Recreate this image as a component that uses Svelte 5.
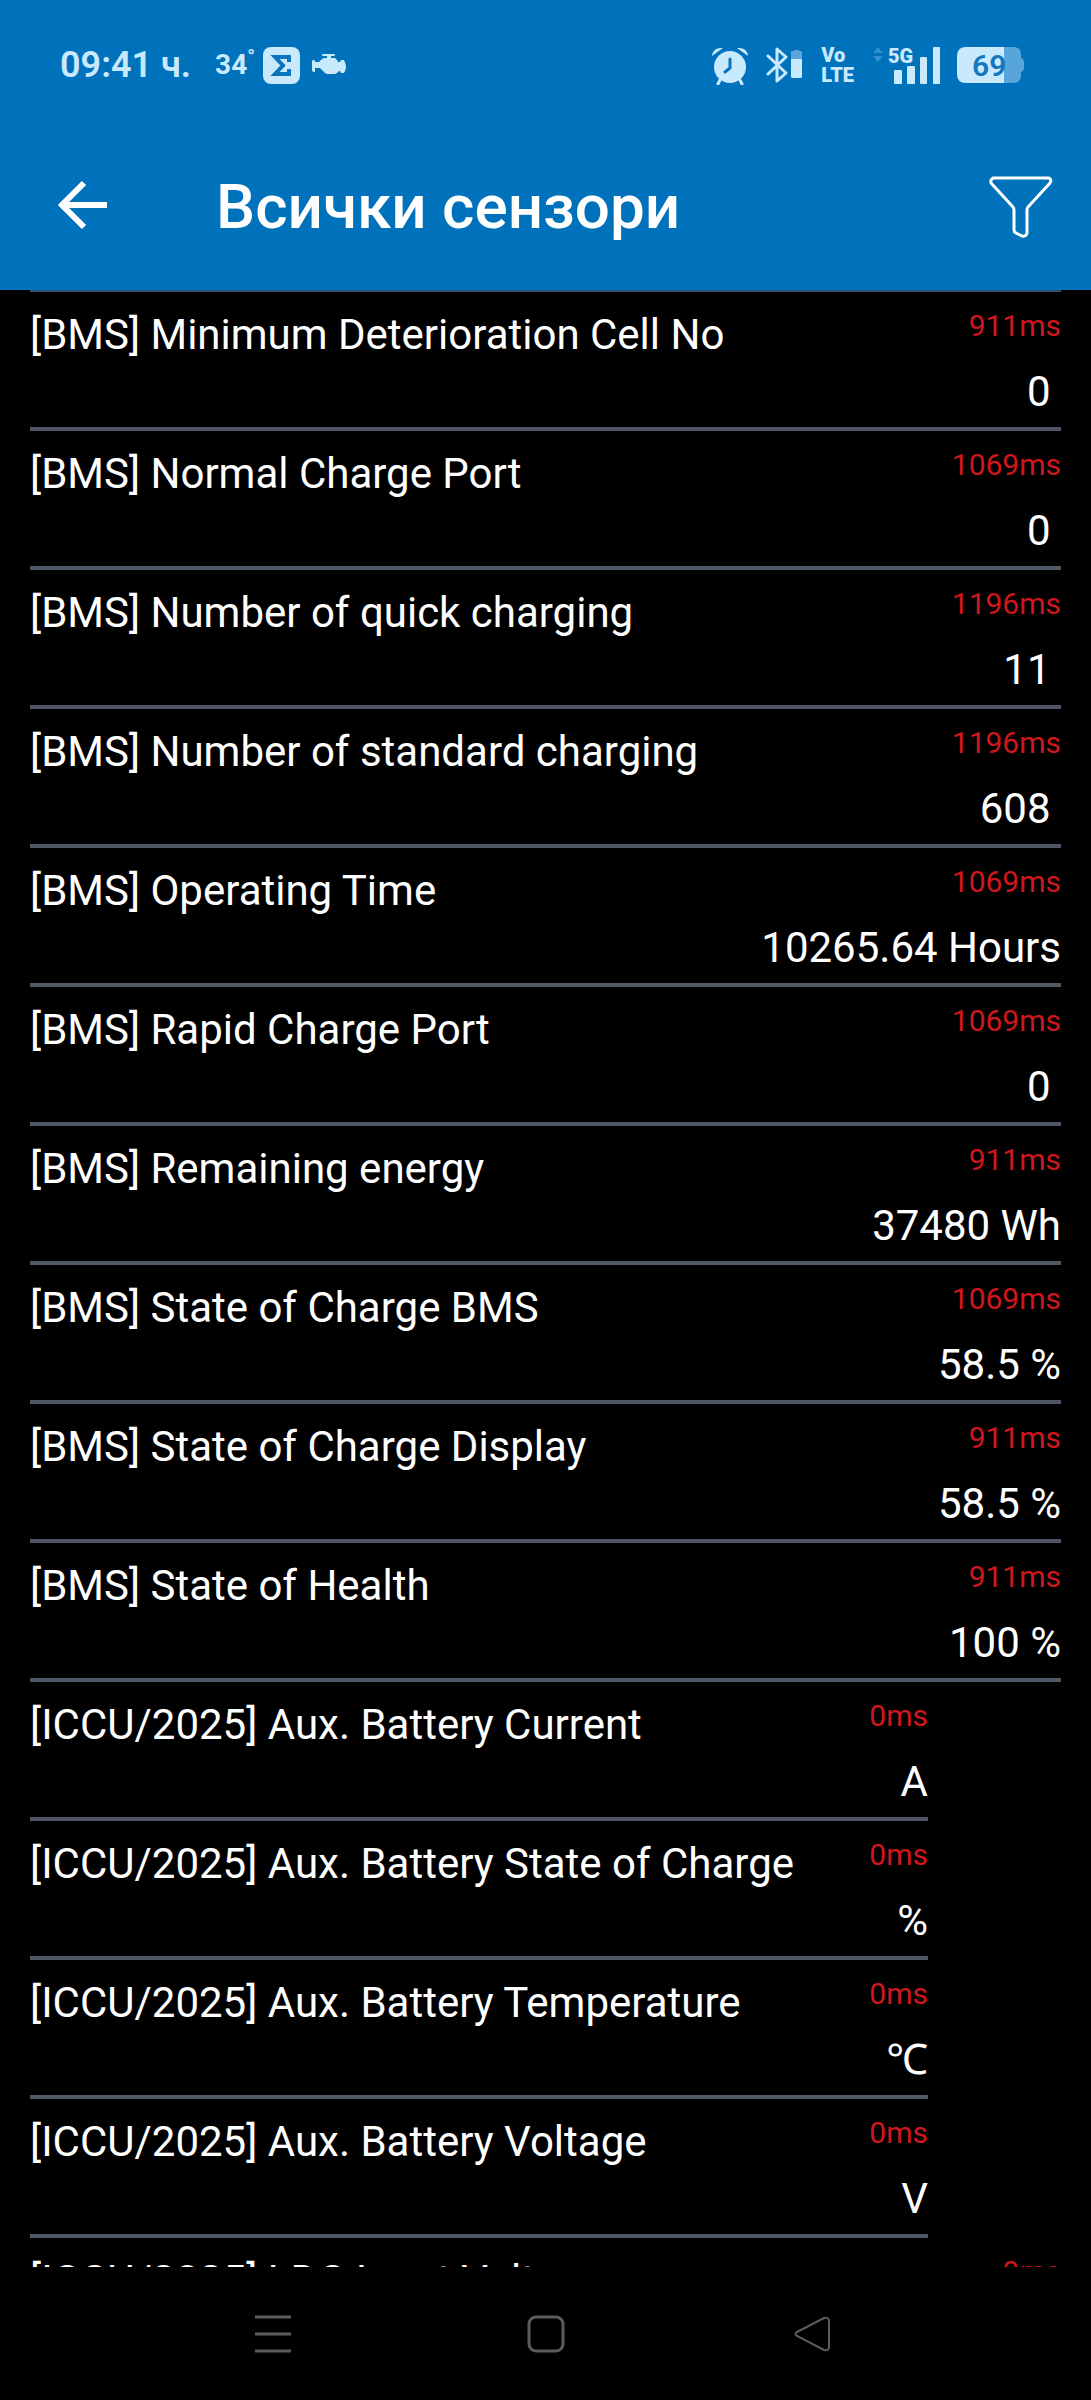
<script lang="ts">
  type Sensor = {
    name: string;
    delay: number;
    value: string;
    narrow?: boolean;
  };

  // values without a unit keep the separator space after the number
  const sensors: Sensor[] = [
    { name: "[BMS] Minimum Deterioration Cell No", delay: 911, value: "0 " },
    { name: "[BMS] Normal Charge Port", delay: 1069, value: "0 " },
    { name: "[BMS] Number of quick charging", delay: 1196, value: "11 " },
    { name: "[BMS] Number of standard charging", delay: 1196, value: "608 " },
    { name: "[BMS] Operating Time", delay: 1069, value: "10265.64 Hours" },
    { name: "[BMS] Rapid Charge Port", delay: 1069, value: "0 " },
    { name: "[BMS] Remaining energy", delay: 911, value: "37480 Wh" },
    { name: "[BMS] State of Charge BMS", delay: 1069, value: "58.5 %" },
    { name: "[BMS] State of Charge Display", delay: 911, value: "58.5 %" },
    { name: "[BMS] State of Health", delay: 911, value: "100 %" },
    { name: "[ICCU/2025] Aux. Battery Current", delay: 0, value: "A", narrow: true },
    { name: "[ICCU/2025] Aux. Battery State of Charge", delay: 0, value: "%", narrow: true },
    { name: "[ICCU/2025] Aux. Battery Temperature", delay: 0, value: "℃", narrow: true },
    { name: "[ICCU/2025] Aux. Battery Voltage", delay: 0, value: "V", narrow: true },
    { name: "[ICCU/2025] LDC Input Voltage", delay: 0, value: "" },
  ];
</script>

<div class="screen">
  <header>
    <div class="status">
      <div class="status-group">
        <span class="time">09:41 ч.</span>
        <span class="temp">34<sup>°</sup></span>
        <svg class="sigma" width="37" height="37" viewBox="0 0 37 37" aria-hidden="true">
          <rect width="37" height="37" rx="8" fill="currentColor" />
          <path d="M26 15V10H12L20 18.500L12 27H26V22" fill="none" stroke="#0a74bd" stroke-width="4" />
        </svg>
        <svg width="35" height="24" viewBox="0 0 35 24" fill="currentColor" aria-hidden="true">
          <path d="M11 1h11q1 0 1 1t-1 1h-3v2h3q2 0 3 2l1 2h2q0-2 2-2h2q2 4 2 7t-2 6h-2q-2 0-2-2h-1l-2 2q-1 1-3 1h-6q-2 0-3-1l-5-5H3v4q-3 0-3-2V8q0-1 2-1 1 0 1 2h4l3-3q1-1 3-1h2V3h-4q-1 0-1-1t1-1z" />
        </svg>
      </div>

      <div class="status-group right">
        <svg width="39" height="39" viewBox="0 0 39 39" aria-hidden="true">
          <circle cx="19" cy="21" r="16" fill="currentColor" />
          <path d="M1 10Q2 1 12 2zM26 2q10-1 11 8z" fill="currentColor" />
          <path d="M9 34l-2 4M29 34l2 4" stroke="currentColor" stroke-width="3" stroke-linecap="round" />
          <path d="M19 13v9l-5 4" stroke="#0a74bd" stroke-width="3" stroke-linecap="round" fill="none" />
        </svg>
        <svg class="bluetooth" width="37" height="38" viewBox="0 0 37 38" aria-hidden="true">
          <path d="M2 10L20 27L11 35V3L20 11L2 28" fill="none" stroke="currentColor" stroke-width="3" stroke-linejoin="round" stroke-linecap="round" />
          <path d="M25 14V6q0-1 2-1h1V4h5v1h1q2 0 2 1v8z" fill="#5aa6dc" />
          <path d="M25 13h11v18q0 1-2 1h-7q-2 0-2-1z" fill="currentColor" />
        </svg>
        <span class="volte">Vo<br />LTE</span>
        <svg class="signal" width="69" height="40" viewBox="0 0 69 40" aria-hidden="true">
          <path d="M1 8l5-6 5 6zM1 11l5 6 5-6z" fill="#2f8fd0" />
          <text x="16" y="18" font-size="20" font-weight="900" fill="currentColor">5G</text>
          <g fill="currentColor">
            <rect x="22" y="25" width="8" height="14" rx="1" />
            <rect x="35" y="21" width="8" height="18" rx="1" />
            <rect x="48" y="12" width="7" height="27" rx="1" />
            <rect x="61" y="2" width="7" height="37" rx="1" />
          </g>
        </svg>
        <svg class="battery" width="67" height="36" viewBox="0 0 67 36" aria-hidden="true">
          <path d="M47 0h9q8 0 8 8v3q3 1 3 4v6q0 3-3 4v3q0 8-8 8h-9z" fill="#58a5db" />
          <path d="M9 0h38v36H9q-9 0-9-9V9q0-9 9-9z" fill="currentColor" />
          <text x="15" y="29" font-size="30" font-weight="600" fill="#1577bd">69</text>
        </svg>
      </div>
    </div>

    <div class="toolbar">
      <button type="button" class="back" aria-label="Назад">
        <svg width="50" height="50" viewBox="0 0 50 50" aria-hidden="true">
          <path d="M26 3L4 25l22 22M4 25h45" fill="none" stroke="currentColor" stroke-width="6" />
        </svg>
      </button>
      <h1>Всички сензори</h1>
      <button type="button" class="filter" aria-label="Филтър">
        <svg width="64" height="62" viewBox="0 0 64 62" aria-hidden="true">
          <path d="M4 2h56q3 2 1 5L39 31q-1 1-1 3v23q-1 4-5 3l-6-3q-2-1-2-3V34q0-2-1-3L2 7Q1 4 4 2z" fill="none" stroke="currentColor" stroke-width="3" stroke-linejoin="round" />
        </svg>
      </button>
    </div>
  </header>

  <main>
    <ul>
      {#each sensors as sensor}
        <li class:narrow={sensor.narrow}>
          <span class="name">{sensor.name}</span>
          <div class="reading">
            <span class="delay">{sensor.delay}ms</span>
            <span class="value">{sensor.value}</span>
          </div>
        </li>
      {/each}
    </ul>
  </main>

  <nav>
    <button type="button" aria-label="Последни">
      <svg width="38" height="38" viewBox="0 0 38 38" aria-hidden="true">
        <path d="M1 2h36M1 19h36M1 36h36" stroke="currentColor" stroke-width="3" />
      </svg>
    </button>
    <button type="button" aria-label="Начало">
      <svg width="38" height="38" viewBox="0 0 38 38" aria-hidden="true">
        <rect x="2" y="2" width="34" height="34" rx="7" fill="none" stroke="currentColor" stroke-width="3" />
      </svg>
    </button>
    <button type="button" aria-label="Обратно">
      <svg width="50" height="38" viewBox="0 0 50 38" aria-hidden="true">
        <path d="M4 17L31 3q5-1 5 3v26q0 4-5 3L4 21q-3-2 0-4z" fill="none" stroke="currentColor" stroke-width="2" />
      </svg>
    </button>
  </nav>
</div>

<style>
  :global(body) {
    background: #000;
  }

  .screen {
    display: flex;
    flex-direction: column;
    height: 100vh;
    background: #000;
    color: #fff;
    font-family: Roboto, "Noto Sans", "Noto Sans CJK SC", sans-serif;
    overflow: hidden;
  }

  header {
    flex: none;
    background: #0072bc;
  }

  .status {
    display: flex;
    align-items: center;
    justify-content: space-between;
    height: 130px;
    padding: 0 67px 0 60px;
    color: #c9e9fd;
  }

  .status-group {
    display: flex;
    align-items: center;
  }

  .time {
    font-size: 36px;
    font-weight: 600;
    line-height: 40px;
  }

  .temp {
    display: flex;
    margin-left: 24px;
    font-size: 28px;
    font-weight: 700;
    line-height: 40px;
  }

  .temp sup {
    font-size: 20px;
    line-height: 24px;
  }

  .sigma {
    margin: 0 12px 0 8px;
  }

  .bluetooth {
    margin-left: 16px;
  }

  .volte {
    margin-left: 18px;
    font-size: 20px;
    font-weight: 900;
    line-height: 20px;
  }

  .signal {
    margin-left: 18px;
  }

  .battery {
    margin-left: 16px;
  }

  .toolbar {
    display: flex;
    align-items: center;
    height: 160px;
    padding: 0 38px 6px 58px;
    box-sizing: border-box;
  }

  button {
    padding: 0;
    border: 0;
    background: none;
    color: inherit;
    cursor: pointer;
  }

  svg {
    display: block;
    flex: none;
  }

  .back {
    padding-bottom: 4px;
  }

  h1 {
    flex: 1;
    margin: 0 0 0 108px;
    font-size: 62px;
    font-weight: 500;
    line-height: 72px;
  }

  main {
    flex: 1;
    min-height: 0;
    overflow: hidden;
  }

  ul {
    margin: 0 30px;
    padding: 0;
    border-top: 2px solid #35506c;
    list-style: none;
  }

  li {
    display: flex;
    justify-content: space-between;
    padding: 16px 0 10px;
    border-bottom: 4px solid #4f5664;
  }

  li.narrow {
    margin-right: 133px;
  }

  .name {
    padding-top: 2px;
    font-size: 42px;
    line-height: 50px;
    white-space: nowrap;
  }

  .reading {
    display: flex;
    flex-direction: column;
    align-items: flex-end;
    gap: 23px;
  }

  .delay {
    color: #cf171d;
    font-size: 30px;
    line-height: 36px;
  }

  .value {
    font-size: 42px;
    line-height: 50px;
    white-space: pre;
  }

  nav {
    display: flex;
    flex: none;
    height: 133px;
    padding: 0 12.5%;
    color: #5c5c5c;
  }

  nav button {
    display: flex;
    flex: 1;
    align-items: center;
    justify-content: center;
  }
</style>
